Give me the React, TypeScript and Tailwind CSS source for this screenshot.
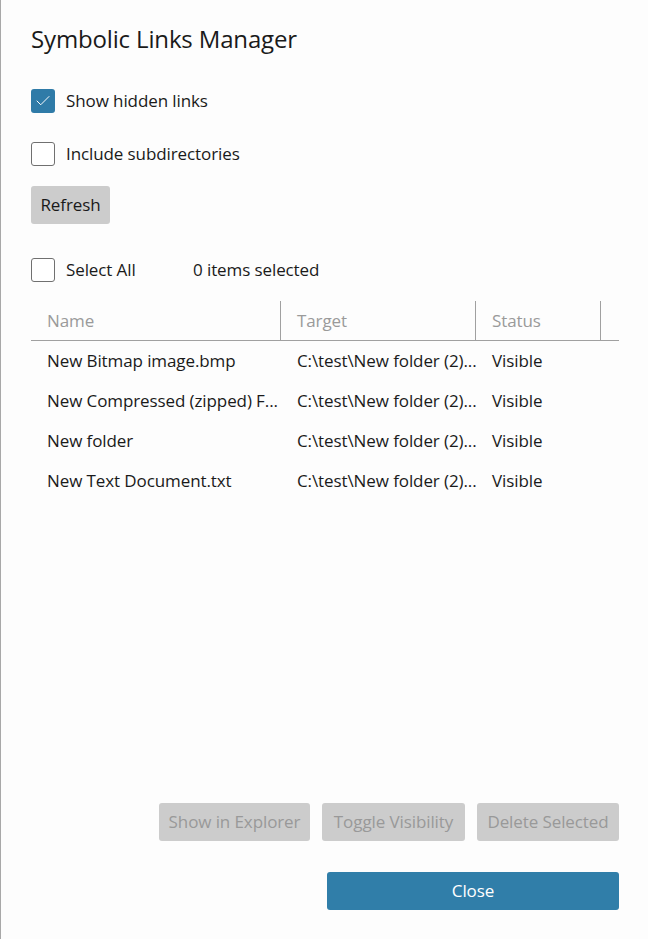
import { Check } from 'lucide-react';

const rows = [
    { name: 'New Bitmap image.bmp', target: 'C:\\test\\New folder (2)...', status: 'Visible' },
    { name: 'New Compressed (zipped) F...', target: 'C:\\test\\New folder (2)...', status: 'Visible' },
    { name: 'New folder', target: 'C:\\test\\New folder (2)...', status: 'Visible' },
    { name: 'New Text Document.txt', target: 'C:\\test\\New folder (2)...', status: 'Visible' },
];

function Box({ checked }: { checked?: boolean }) {
    return checked ? (
        <div className="w-6 h-6 rounded-[3px] bg-[#2f7ba8] flex items-center justify-center shrink-0">
            <Check className="w-[18px] h-[18px] text-white" strokeWidth={1.3} />
        </div>
    ) : (
        <div className="w-6 h-6 rounded-[3px] border border-[#707070] bg-white shrink-0" />
    );
}

export default function App() {
    return (
        <div
            className="w-[648px] h-[939px] bg-[#fdfdfd] border-l border-[#a8a8a8] flex flex-col text-[#1a1a1a] overflow-hidden"
            style={{ fontFamily: '"Open Sans", "Noto Sans", sans-serif' }}
        >
            <div className="pl-[30px] pr-[29px] flex flex-col flex-1">
                <h1 className="text-[24px] leading-none mt-[27px] tracking-[-0.15px]">Symbolic Links Manager</h1>

                <label className="flex items-center gap-[11px] mt-[38px] h-6">
                    <Box checked />
                    <span className="text-[17px] tracking-[-0.1px]">Show hidden links</span>
                </label>

                <label className="flex items-center gap-[11px] mt-[29px] h-6">
                    <Box />
                    <span className="text-[17px] tracking-[-0.1px]">Include subdirectories</span>
                </label>

                <button className="mt-[20px] self-start h-[38px] w-[79px] rounded-[3px] bg-[#cccccc] text-[17px] tracking-[-0.1px]">
                    Refresh
                </button>

                <div className="flex items-center mt-[34px] h-6">
                    <label className="flex items-center gap-[11px] w-[162px]">
                        <Box />
                        <span className="text-[17px] tracking-[-0.1px]">Select All</span>
                    </label>
                    <span className="text-[17px] tracking-[-0.1px]">0 items selected</span>
                </div>

                <div className="mt-[19px]">
                    <div className="flex h-[40px] border-b border-[#a0a0a0] text-[#9a9a9a] text-[17px] tracking-[-0.1px]">
                        <div className="w-[250px] pl-4 flex items-center border-r border-[#a0a0a0]">Name</div>
                        <div className="w-[195px] pl-4 flex items-center border-r border-[#a0a0a0]">Target</div>
                        <div className="w-[125px] pl-4 flex items-center border-r border-[#a0a0a0]">Status</div>
                    </div>
                    {rows.map((r) => (
                        <div key={r.name} className="flex h-[40px] items-center text-[17px] tracking-[-0.1px]">
                            <div className="w-[250px] pl-4 whitespace-nowrap">{r.name}</div>
                            <div className="w-[195px] pl-4 whitespace-nowrap">{r.target}</div>
                            <div className="w-[125px] pl-4">{r.status}</div>
                        </div>
                    ))}
                </div>

                <div className="flex-1" />

                <div className="flex justify-end gap-3">
                    {[
                        { t: 'Show in Explorer', w: 'w-[151px]' },
                        { t: 'Toggle Visibility', w: 'w-[143px]' },
                        { t: 'Delete Selected', w: 'w-[142px]' },
                    ].map((b) => (
                        <button
                            key={b.t}
                            className={`${b.w} h-[38px] rounded-[3px] bg-[#cccccc] text-[#999999] text-[17px] tracking-[-0.1px] whitespace-nowrap`}
                        >
                            {b.t}
                        </button>
                    ))}
                </div>

                <div className="flex justify-end mt-[31px] mb-[29px]">
                    <button className="w-[292px] h-[38px] rounded-[3px] bg-[#307ea9] text-white text-[17px] tracking-[-0.1px]">
                        Close
                    </button>
                </div>
            </div>
        </div>
    );
}
